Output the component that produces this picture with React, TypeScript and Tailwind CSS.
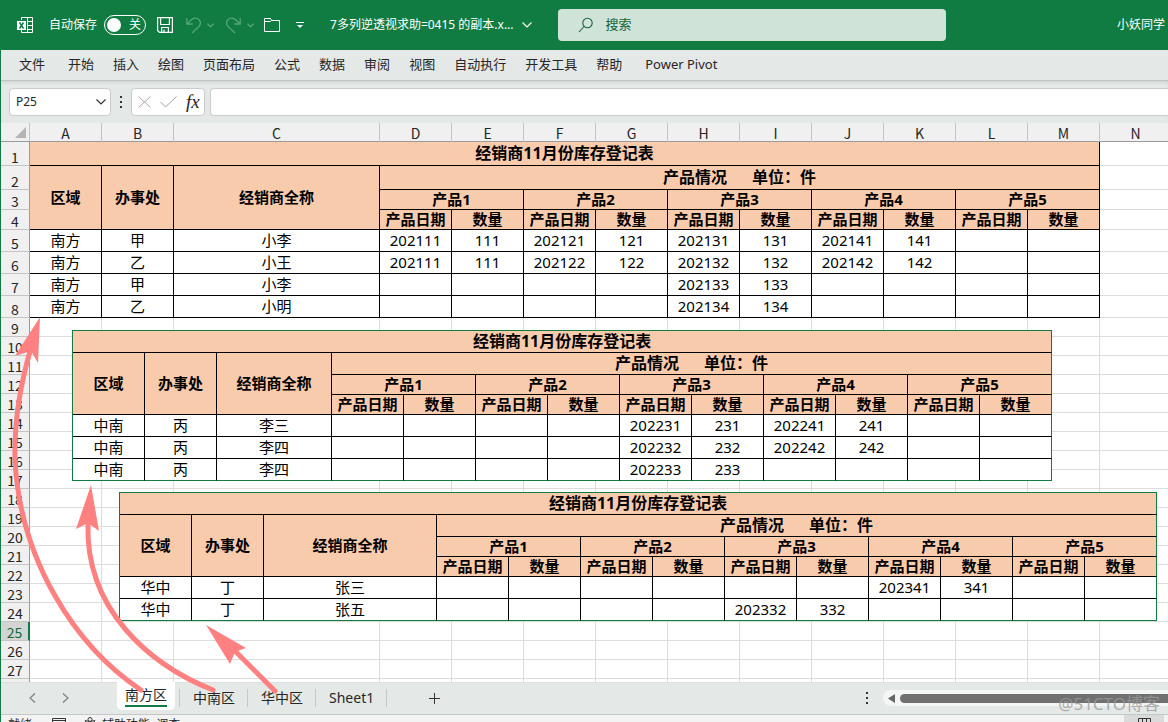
import React, { useState } from 'react'

const columns = ['A', 'B', 'C', 'D', 'E', 'F', 'G', 'H', 'I', 'J', 'K', 'L', 'M', 'N']
const ribbonTabs = ['文件', '开始', '插入', '绘图', '页面布局', '公式', '数据', '审阅', '视图', '自动执行', '开发工具', '帮助', 'Power Pivot']
const sheetNames = ['南方区', '中南区', '华中区', 'Sheet1']
const products = ['产品1', '产品2', '产品3', '产品4', '产品5']

type Row = string[]

const south: Row[] = [
  ['南方', '甲', '小李', '202111', '111', '202121', '121', '202131', '131', '202141', '141', '', ''],
  ['南方', '乙', '小王', '202111', '111', '202122', '122', '202132', '132', '202142', '142', '', ''],
  ['南方', '甲', '小李', '', '', '', '', '202133', '133', '', '', '', ''],
  ['南方', '乙', '小明', '', '', '', '', '202134', '134', '', '', '', ''],
]
const midSouth: Row[] = [
  ['中南', '丙', '李三', '', '', '', '', '202231', '231', '202241', '241', '', ''],
  ['中南', '丙', '李四', '', '', '', '', '202232', '232', '202242', '242', '', ''],
  ['中南', '丙', '李四', '', '', '', '', '202233', '233', '', '', '', ''],
]
const center: Row[] = [
  ['华中', '丁', '张三', '', '', '', '', '', '', '202341', '341', '', ''],
  ['华中', '丁', '张五', '', '', '', '', '202332', '332', '', '', '', ''],
]

const headCell = 'border-r border-b border-black bg-[#f8cbad] p-0 pb-[2px] text-center align-middle font-bold leading-4 whitespace-pre'
const dataCell = 'border-r border-b border-black bg-white p-0 pb-[2px] text-center align-middle leading-4'

// the four header rows, without the <tr>, so the sheet can put its row number in front
function headRow(n: number) {
  if (n == 0) {
    return <th colSpan={13} className={`${headCell} text-[16px]`}>经销商11月份库存登记表</th>
  }
  if (n == 1) {
    return (
      <>
        <th rowSpan={3} className={headCell}>区域</th>
        <th rowSpan={3} className={headCell}>办事处</th>
        <th rowSpan={3} className={headCell}>经销商全称</th>
        <th colSpan={10} className={`${headCell} text-[16px]`}>{'产品情况      单位：件'}</th>
      </>
    )
  }
  if (n == 2) {
    return products.map((p) => <th key={p} colSpan={2} className={headCell}>{p}</th>)
  }
  return products.map((p) => (
    <React.Fragment key={p}>
      <th className={headCell}>产品日期</th>
      <th className={headCell}>数量</th>
    </React.Fragment>
  ))
}

function dataRow(row: Row) {
  return row.map((val, i) => <td key={i} className={dataCell}>{val}</td>)
}

const headHeights = ['h-[22px]', 'h-[22px]', 'h-5', 'h-5']

function PastedTable({ rows, nameCol, className }: { rows: Row[]; nameCol: string; className: string }) {
  return (
    <table
      className={`absolute table-fixed border-separate border-spacing-0 border-t border-l border-[#107c41] text-[15px] text-black [&_tr>:last-child]:border-r-[#107c41] [&_tr:last-child>td]:border-b-[#107c41] ${className}`}
    >
      <colgroup>
        <col className="w-[72px]" />
        <col className="w-[72px]" />
        <col className={nameCol} />
        {rows[0].slice(3).map((_, i) => <col key={i} className="w-[72px]" />)}
      </colgroup>
      <tbody>
        {headHeights.map((h, i) => <tr key={i} className={h}>{headRow(i)}</tr>)}
        {rows.map((row, i) => <tr key={i} className="h-[22px]">{dataRow(row)}</tr>)}
      </tbody>
    </table>
  )
}

function rowHeight(n: number) {
  if (n <= 2) return 'h-6'
  if (n <= 4) return 'h-5'
  if (n <= 8) return 'h-[22px]'
  return 'h-[19px]'
}

function Sheet() {
  const rows = Array.from({ length: 28 }, (_, i) => i + 1)
  return (
    <div className="relative min-h-0 flex-1 overflow-hidden bg-white">
      {/* the last column has no width and takes what is left of a wide window */}
      <table className="w-full min-w-[1171px] table-fixed border-separate border-spacing-0 text-[15px] text-black">
        <colgroup>
          <col className="w-[29px]" />
          {columns.map((c) => <col key={c} className={c == 'C' ? 'w-[206px]' : 'w-[72px]'} />)}
          <col />
        </colgroup>
        <thead>
          <tr className="h-[19px] bg-[#f0f0f0] text-[#262626]">
            <th className="border-r border-b border-r-[#c4c4c4] border-b-[#9b9b9b] p-0">
              <svg className="mr-[3px] ml-auto block" width="11" height="11" viewBox="0 0 11 11">
                <path d="M11 0V11H0Z" fill="#b4b4b4" />
              </svg>
            </th>
            {columns.map((c) => (
              <th key={c} className="border-r border-b border-r-[#c4c4c4] border-b-[#9b9b9b] p-0 align-bottom font-['Noto_Sans_CJK_SC',sans-serif] text-[14px] leading-4 font-normal">
                {c}
              </th>
            ))}
            <th className="border-b border-b-[#9b9b9b] p-0"></th>
          </tr>
        </thead>
        <tbody>
          {rows.map((n) => (
            <tr key={n} className={rowHeight(n)}>
              <th
                className={`border-b border-b-[#c4c4c4] p-0 align-bottom font-['Noto_Sans_CJK_SC',sans-serif] text-[14px] leading-4 font-normal ${
                  n == 25 ? 'border-r-2 border-r-[#107c41] bg-[#d4d4d4] text-[#0e6a37]' : 'border-r border-r-[#9b9b9b] bg-[#f0f0f0] text-[#262626]'
                }`}
              >
                {n}
              </th>
              {n <= 4 && headRow(n - 1)}
              {n > 4 && n <= 8 && dataRow(south[n - 5])}
              {columns.slice(n <= 8 ? 13 : 0).map((c) => (
                <td key={c} className="border-r border-b border-[#dcdcdc] p-0"></td>
              ))}
              <td className="border-b border-[#dcdcdc] p-0"></td>
            </tr>
          ))}
        </tbody>
      </table>
      <PastedTable rows={midSouth} nameCol="w-[115px]" className="top-[207px] left-[71px] w-[980px]" />
      <PastedTable rows={center} nameCol="w-[173px]" className="top-[369px] left-[118px] w-[1038px]" />
    </div>
  )
}

function Chevron({ className = '' }) {
  return (
    <svg className={className} width="10" height="6" viewBox="0 0 10 6" fill="none" stroke="currentColor" strokeWidth="1.2">
      <path d="M0.5 0.5L5 5L9.5 0.5" />
    </svg>
  )
}

function SmallChevron() {
  return (
    <svg width="7" height="5" viewBox="0 0 7 5" fill="none" stroke="currentColor" strokeWidth="1.3">
      <path d="M0.5 0.8L3.5 3.8L6.5 0.8" />
    </svg>
  )
}

function TitleBar() {
  const [autoSave, setAutoSave] = useState(false)
  return (
    <header className="flex h-[50px] shrink-0 items-center bg-[#107c41] text-[12px] text-white">
      <svg className="ml-4 shrink-0" width="17" height="17" viewBox="0 0 17 17" fill="none" stroke="white">
        <path d="M4.5 3V.5H15.5V15.5H4.5V13M10.5 .5V15.5M10 4.5H15.5M10 8.5H15.5M10 12.5H15.5" />
        <rect x="0" y="4" width="9" height="9" fill="white" stroke="none" />
        <path d="M2.5 5.5L6.5 11.5M6.5 5.500L2.5 11.5" stroke="#107c41" strokeWidth="1.5" />
      </svg>
      <span className="ml-[15px] shrink-0">自动保存</span>
      <button
        type="button"
        aria-label="自动保存"
        onClick={() => setAutoSave(!autoSave)}
        className="ml-[7px] flex h-5 w-[42px] shrink-0 items-center rounded-full border border-white pr-1 pl-[2px]"
      >
        <span className="h-[14px] w-[14px] rounded-full bg-white"></span>
        <span className="ml-auto">{autoSave ? '开' : '关'}</span>
      </button>
      <button type="button" aria-label="保存" className="ml-[11px] shrink-0">
        <svg width="16" height="16" viewBox="0 0 16 16" fill="none" stroke="white" strokeWidth="1.2">
          <path d="M.6.6H15.4V15.4H2.5L.6 13.5ZM3.6.6V7.5H12.4V.6M4.6 15.4V10.5H11.4V15.4M7 12.5V15.4" />
        </svg>
      </button>
      <button type="button" aria-label="撤消" className="ml-[13px] flex shrink-0 items-center gap-[6px] text-[#57a37a]">
        <svg width="15" height="17" viewBox="0 0 15 17" fill="none" stroke="currentColor" strokeWidth="1.3">
          <path d="M.8 1V7H6.8M1 7L5 3C7.5.5 11 .5 13 2.7C15 5 14.5 8 12.5 10L6 16" />
        </svg>
        <SmallChevron />
      </button>
      <button type="button" aria-label="恢复" className="ml-3 flex shrink-0 items-center gap-[6px] text-[#57a37a]">
        <svg width="15" height="17" viewBox="0 0 15 17" fill="none" stroke="currentColor" strokeWidth="1.3">
          <path d="M14.2 1V7H8.2M14 7L10 3C7.5.5 4 .5 2 2.7C0 5 .5 8 2.5 10L9 16" />
        </svg>
        <SmallChevron />
      </button>
      <button type="button" aria-label="打开" className="ml-[10px] shrink-0">
        <svg width="16" height="16" viewBox="0 0 16 16" fill="none" stroke="white">
          <path d="M.5 1.5H6.500L7.500 3.5H15.5V14.5H.5ZM.5 4.5H6.500L7.500 3.5" />
        </svg>
      </button>
      <button type="button" aria-label="自定义快速访问工具栏" className="ml-4 shrink-0">
        <svg width="8" height="8" viewBox="0 0 8 8" fill="none" stroke="white">
          <path d="M0 1.5H8" />
          <path d="M1 4H7L4 7Z" fill="white" stroke="none" />
        </svg>
      </button>
      <button type="button" className="ml-[26px] flex shrink-0 items-center gap-2">
        <span>7多列逆透视求助=0415 的副本.x...</span>
        <Chevron />
      </button>
      <label className="ml-[26px] flex h-8 w-[388px] min-w-0 items-center rounded-[4px] bg-[#cfe3d8] pl-5 text-[#14643a]">
        <svg width="16" height="16" viewBox="0 0 16 16" fill="none" stroke="currentColor" strokeWidth="1.1" className="shrink-0">
          <circle cx="9.5" cy="6" r="4.7" />
          <path d="M6 9.5L1 15" />
        </svg>
        <input aria-label="搜索" placeholder="搜索" className="ml-3 w-full bg-transparent text-[13px] outline-none placeholder:text-[#14643a]" />
      </label>
      <span className="mr-[3px] ml-auto shrink-0">小妖同学</span>
    </header>
  )
}

function FormulaBar() {
  return (
    <div className="flex h-[43px] shrink-0 items-start bg-[#e4e8e6] pt-2 pl-2 shadow-[inset_0_1px_0_#bfc3c1,inset_0_3px_2px_#d6dad8]">
      <div className="flex h-7 w-[102px] items-center rounded-[4px] border border-[#c9cccb] bg-white pr-1">
        <input aria-label="名称框" defaultValue="P25" className="w-full min-w-0 pl-[6px] text-[12px] text-[#262626] outline-none" />
        <Chevron className="shrink-0 text-[#333]" />
      </div>
      <svg className="mt-2 ml-2 shrink-0" width="4" height="12" viewBox="0 0 4 12" fill="#333">
        <path d="M1 0h2v2H1zM1 5h2v2H1zM1 10h2v2H1z" />
      </svg>
      <div className="ml-2 flex h-7 w-[74px] shrink-0 items-center rounded-[4px] border border-[#c9cccb] bg-white pl-[6px]">
        <button type="button" aria-label="取消">
          <svg width="13" height="12" viewBox="0 0 13 12" fill="none" stroke="#a8a8a8">
            <path d="M.5.5L12.5 11.5M12.5.5L.5 11.5" />
          </svg>
        </button>
        <button type="button" aria-label="输入" className="ml-[9px]">
          <svg width="17" height="12" viewBox="0 0 17 12" fill="none" stroke="#a0a0a0">
            <path d="M.5 6L5.5 11L16.5.5" />
          </svg>
        </button>
        <button type="button" aria-label="插入函数" className="ml-[9px] font-['Liberation_Serif',serif] text-[19px] leading-5 text-[#262626] italic">
          fx
        </button>
      </div>
      <input aria-label="编辑栏" className="ml-[5px] h-7 min-w-0 flex-1 rounded-l-[4px] border border-r-0 border-[#c9cccb] bg-white px-2 text-[13px] outline-none" />
    </div>
  )
}

function SheetTabs() {
  const [active, setActive] = useState('南方区')
  return (
    <div className="flex h-8 shrink-0 items-start border-t border-[#dcdfde] bg-[#e4e8e6] text-[14px] text-[#262626]">
      <div className="flex h-[30px] w-[116px] shrink-0 items-center gap-[26px] pl-7 text-[#7d807f]">
        <button type="button" aria-label="上一个">
          <svg width="7" height="10" viewBox="0 0 7 10" fill="none" stroke="currentColor" strokeWidth="1.2"><path d="M6 .5L1 5L6 9.5" /></svg>
        </button>
        <button type="button" aria-label="下一个">
          <svg width="7" height="10" viewBox="0 0 7 10" fill="none" stroke="currentColor" strokeWidth="1.2"><path d="M1 .5L6 5L1 9.5" /></svg>
        </button>
      </div>
      {sheetNames.map((name) =>
        name == active ? (
          <button key={name} type="button" className="-mt-px mr-1 h-7 shrink-0 rounded-b-[5px] bg-white px-2">
            <span className="block border-b-2 border-[#107c41] leading-5">{name}</span>
          </button>
        ) : (
          <div key={name} className="flex h-[30px] shrink-0 items-center">
            <span className="h-[18px] w-px bg-[#c6c9c8]"></span>
            <button type="button" onClick={() => setActive(name)} className="pr-3 pl-[13px] leading-5">{name}</button>
          </div>
        )
      )}
      <div className="flex h-[30px] shrink-0 items-center">
        <span className="h-[18px] w-px bg-[#c6c9c8]"></span>
        <button type="button" aria-label="新工作表" className="ml-[42px]">
          <svg width="11" height="11" viewBox="0 0 11 11" stroke="#333"><path d="M5.5 0V11M0 5.5H11" /></svg>
        </button>
      </div>
      <div className="ml-auto flex h-[30px] w-[303px] shrink-0 items-center">
        <svg className="shrink-0" width="4" height="12" viewBox="0 0 4 12" fill="#333">
          <path d="M1 0h2v2H1zM1 5h2v2H1zM1 10h2v2H1z" />
        </svg>
        <div className="ml-[14px] flex h-4 flex-1 items-center gap-[5px] rounded-l-full bg-[#f4f5f5] pl-[5px]">
          <svg width="7" height="9" viewBox="0 0 7 9" fill="#666"><path d="M7 0V9L0 4.500Z" /></svg>
          <div className="h-[9px] flex-1 rounded-l-full bg-[#707070]"></div>
        </div>
      </div>
    </div>
  )
}

function StatusBar() {
  return (
    <footer className="flex h-2 shrink-0 items-start overflow-hidden border-t border-[#c4c7c6] bg-[#f3f3f3] text-[12px] leading-4 text-[#262626]">
      <span className="mt-[2px] ml-[7px]">就绪</span>
      <svg className="mt-[3px] ml-5" width="14" height="12" viewBox="0 0 14 12" fill="none" stroke="#333">
        <path d="M.5.5H13.5V11.5H.5ZM.5 2.5H13.5" />
        <path d="M7 5H13V8H7Z" fill="#333" />
      </svg>
      <svg className="mt-[2px] ml-[18px]" width="12" height="14" viewBox="0 0 12 14" fill="none" stroke="#333">
        <circle cx="6" cy="2.5" r="2" />
        <path d="M1 4C1 2.5 3 4.5 6 4.5S11 2.5 11 4L8 6.5V13M4 13V6.5L1 4" />
      </svg>
      <span className="mt-[2px] ml-[6px]">辅助功能: 调查</span>
      <span className="mr-1 ml-auto flex h-full w-10 justify-center bg-[#dadada] pt-[3px]">
        <svg width="13" height="12" viewBox="0 0 13 12" fill="none" stroke="#333">
          <path d="M.5.5H12.5V11.5H.5ZM4.5.5V11.5M8.5.5V11.5M.5 4.5H12.5" />
        </svg>
      </span>
    </footer>
  )
}

// hand drawn arrows from the sheet tabs to the tables
function Arrows() {
  return (
    <svg className="pointer-events-none absolute top-0 left-0" width="320" height="722" viewBox="0 0 320 722" fill="none" stroke="#ff8080" strokeWidth="5" strokeLinecap="round">
      <path d="M141 690C75 646 20 560 15 460C14 420 20 385 31 348" />
      <path d="M213 690C150 665 85 610 88 523" />
      <path d="M275 691L234 650" />
      <g fill="#ff8080" stroke="none">
        <path d="M40 317L15 356L31 351L38 363Z" />
        <path d="M91 485L76 529L88 523L99 531Z" />
        <path d="M206 625L246 648L235 652L230 664Z" />
      </g>
    </svg>
  )
}

function App() {
  return (
    <div className="relative flex h-screen flex-col overflow-hidden border-l border-[#107c41] font-['Noto_Sans','Noto_Sans_CJK_SC',sans-serif]">
      <TitleBar />
      <nav className="flex h-[30px] shrink-0 items-center gap-[19px] bg-[#e4e8e6] pl-[18px] text-[13px] text-[#262626]">
        {ribbonTabs.map((t) => (
          <button key={t} type="button" className="shrink-0 first:mr-1 last:ml-1">{t}</button>
        ))}
      </nav>
      <FormulaBar />
      <Sheet />
      <SheetTabs />
      <StatusBar />
      <div className="absolute top-0 -left-px">
        <Arrows />
      </div>
      <span className="pointer-events-none absolute right-2 bottom-[6px] text-[17px] leading-6 text-[#9a9a9a]/80">@51CTO博客</span>
    </div>
  )
}

export default App
